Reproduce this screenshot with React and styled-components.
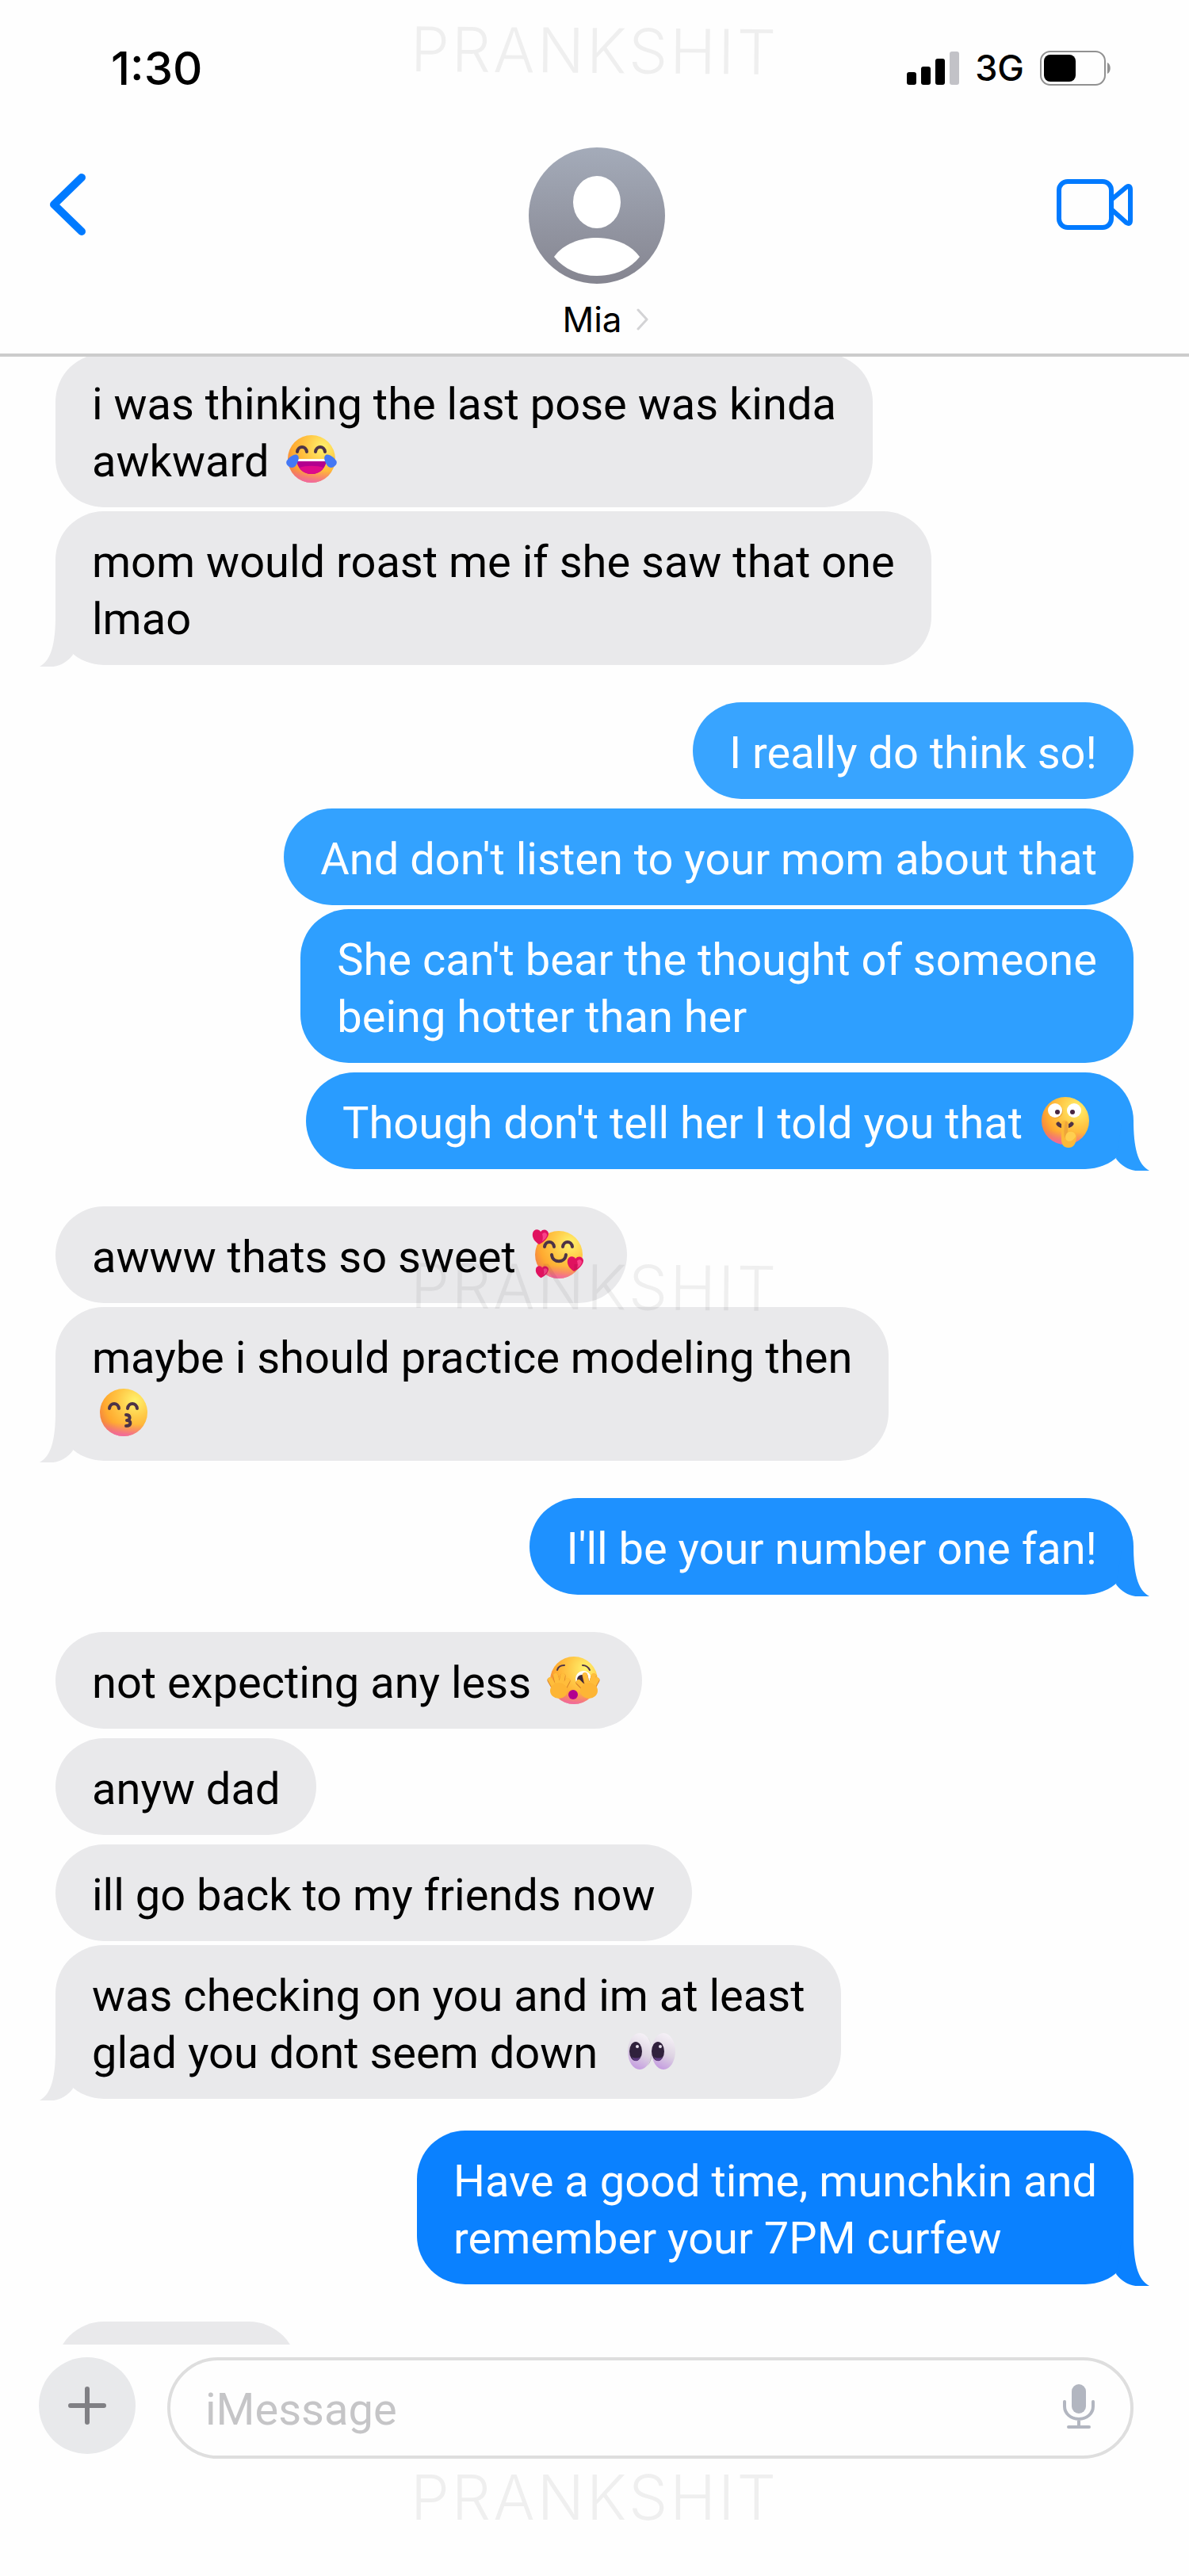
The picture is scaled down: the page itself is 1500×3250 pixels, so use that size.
import React, { useId, useState } from 'react';
import styled, { createGlobalStyle, css } from 'styled-components';

const GlobalStyle = createGlobalStyle`
	* {
		box-sizing: border-box;
	}
	body {
		margin: 0;
		background: #fefefe;
		color: #000;
		font-family: Inter, "Liberation Sans", sans-serif;
	}
	button {
		padding: 0;
		border: 0;
		background: none;
		color: inherit;
		font: inherit;
		cursor: pointer;
	}
`;

const Phone = styled.div`
	position: relative;
	display: flex;
	flex-direction: column;
	height: 100vh;
	overflow: hidden;
`;

const Header = styled.header`
	border-bottom: 4px solid #ccc;
`;

const StatusBar = styled.div`
	display: flex;
	justify-content: space-between;
	align-items: center;
	height: 172px;
	padding: 0 98px 0 140px;
	font-weight: 500;
`;

const Time = styled.time`
	font-size: 58px;
	line-height: 72px;
`;

const StatusIcons = styled.div`
	display: flex;
	align-items: center;
	gap: 20px;
	font-size: 45px;
	line-height: 56px;
`;

const Nav = styled.div`
	display: grid;
	grid-template-columns: 1fr auto 1fr;
	height: 274px;
	padding: 14px 56px 0 62px;
`;

const NavButton = styled.button`
	align-self: start;
	justify-self: ${(props) => (props.$end ? 'end' : 'start')};
	height: 80px;
	margin-top: 32px;

	svg {
		display: block;
	}
`;

const Contact = styled.button`
	display: flex;
	flex-direction: column;
	align-items: center;
	gap: 18px;
	font-size: 44px;
	line-height: 54px;
`;

const ContactName = styled.span`
	display: flex;
	align-items: center;
	gap: 18px;
	padding-left: 22px;
`;

const Thread = styled.ol`
	flex: 1;
	min-height: 0;
	margin: 0;
	padding: 0 70px;
	overflow: hidden;
	list-style: none;
`;

const Row = styled.li`
	display: flex;
	justify-content: ${(props) => (props.$sent ? 'flex-end' : 'flex-start')};
	padding-top: ${(props) => (props.$single ? 12 : 5)}px;

	${(props) => props.$group && css`
		margin-top: 35px;
	`}
	&:first-child {
		margin-top: -9px;
	}
`;

const Bubble = styled.div`
	position: relative;
	max-width: 82%;
	min-width: ${(props) => props.$minWidth || 0}px;
	min-height: 122px;
	padding: 28px 46px 22px;
	border-radius: 61px;
	background: ${(props) => props.$color};
	color: ${(props) => (props.$sent ? '#fff' : '#000')};
	font-family: Roboto, "Liberation Sans", sans-serif;
	font-size: 56px;
	line-height: 72px;
	white-space: pre-line;
`;

const TailSvg = styled.svg`
	position: absolute;
	bottom: -2px;
	${(props) => (props.$sent ? 'right: -20px;' : 'left: -20px; transform: scaleX(-1);')}
`;

const EmojiSvg = styled.svg`
	width: 64px;
	height: 64px;
	margin: -10px 8px;
	vertical-align: 0;
	overflow: visible;
`;

const Footer = styled.footer`
	display: flex;
	align-items: flex-start;
	gap: 40px;
	height: 292px;
	padding: 16px 70px 0 49px;
`;

const PlusButton = styled.button`
	flex: none;
	width: 122px;
	height: 122px;
	border-radius: 50%;
	background: #e8e9eb;

	svg {
		display: block;
		margin: 0 auto;
	}
`;

const InputBox = styled.label`
	flex: 1;
	display: flex;
	align-items: center;
	height: 128px;
	padding: 0 44px;
	border: 4px solid #dedede;
	border-radius: 64px;
`;

const MessageInput = styled.input`
	flex: 1;
	min-width: 0;
	height: 72px;
	padding: 4px 0 0;
	border: 0;
	outline: 0;
	background: none;
	font-family: Roboto, "Liberation Sans", sans-serif;
	font-size: 56px;

	&::placeholder {
		color: #c5c5c7;
		opacity: 1;
	}
`;

const Watermark = styled.div`
	position: absolute;
	top: ${(props) => props.$top}px;
	left: 0;
	right: 0;
	color: rgba(0, 0, 0, 0.06);
	font-size: 78px;
	font-weight: 300;
	line-height: 94px;
	letter-spacing: 3px;
	text-align: center;
	pointer-events: none;
	transform: rotate(${(props) => props.$tilt || 0}deg);
`;

// ---- emoji ----

const Face = ({ children }) => {
	const id = useId();
	return (
		<EmojiSvg viewBox="0 0 64 64" aria-hidden="true">
			<defs>
				<radialGradient id={`${id}y`} cx="0.74" cy="0.26" r="0.8">
					<stop offset="0" stopColor="#fff36e" />
					<stop offset="0.45" stopColor="#ffc846" />
					<stop offset="0.8" stopColor="#ffaa30" />
					<stop offset="1" stopColor="#f5893f" />
				</radialGradient>
				<linearGradient id={`${id}p`} x1="0.5" y1="0" x2="0.42" y2="1">
					<stop offset="0.72" stopColor="#f060a8" stopOpacity="0" />
					<stop offset="1" stopColor="#f060b8" stopOpacity="0.85" />
				</linearGradient>
			</defs>
			<circle cx="32" cy="32" r="30" fill={`url(#${id}y)`} />
			<circle cx="32" cy="32" r="30" fill={`url(#${id}p)`} />
			{children}
		</EmojiSvg>
	);
};

const BROWN = '#4d3347';

const SmileEyes = ({ y }) => (
	<g fill="none" stroke={BROWN} strokeWidth="4" strokeLinecap="round">
		<path d={`M14 ${y + 7}c1-8 11-8 12 0`} />
		<path d={`M37 ${y + 7}c1-8 11-8 12 0`} />
	</g>
);

const Heart = ({ x, y, size }) => (
	<g transform={`translate(${x} ${y}) scale(${size / 20})`}>
		<path d="M8 19C2 15-1 10 0 5 1-1 8-1 10 3c3-4 9-3 10 2 0 5-5 11-12 14z" fill="#e0125f" />
		<path d="M12 6c2-3 6-2 6 1 0 3-3 6-6 8 1-3 1-6 0-9z" fill="#ff4f93" opacity="0.8" />
	</g>
);

const Joy = () => (
	<Face>
		<SmileEyes y={16} />
		<path d="M13 32h38c0 11-8 19-19 19S13 43 13 32z" fill="#b3008f" />
		<path d="M17 43c7-3 23-3 30 0-3 5-8 8-15 8s-12-3-15-8z" fill="#de0a8b" />
		<path d="M13 32h38v3H13z" fill="#fff" />
		<path d="M14 27c3 2 2 7-1 12-2 4-6 5-9 3s-5-5-3-8c3-4 9-9 13-7z" fill="#4478f5" />
		<path d="M50 27c-3 2-2 7 1 12 2 4 6 5 9 3s5-5 3-8c-3-4-9-9-13-7z" fill="#4478f5" />
	</Face>
);

const Shush = () => (
	<Face>
		<circle cx="20" cy="20" r="9" fill="#d98524" opacity="0.4" />
		<circle cx="19" cy="19" r="9" fill="#fff" />
		<circle cx="43" cy="19" r="9" fill="#fff" />
		<circle cx="22" cy="21" r="3" fill="#482641" />
		<circle cx="41" cy="21" r="3" fill="#482641" />
		<path d="M23 36c3 4 14 4 17 0" fill="none" stroke={BROWN} strokeWidth="5" strokeLinecap="round" />
		<path d="M27 36c0-6 9-6 9 0v9c7-1 11 3 10 9-1 8-4 12-10 12s-9-4-9-10z" fill="#fcb939" />
		<path d="M32 33c3 0 3 2 3 4v9l-4 8c-1-6-1-14 1-21z" fill="#eea53a" />
		<path d="M37 46c5-1 8 2 8 6-3 5-8 8-12 4-2-4 0-9 4-10z" fill="#ffcf50" />
	</Face>
);

const Smitten = () => (
	<Face>
		<SmileEyes y={15} />
		<path d="M23 32c1 11 17 11 18 0" fill="none" stroke={BROWN} strokeWidth="4" strokeLinecap="round" />
		<Heart x={-1} y={0} size={20} />
		<Heart x={43} y={34} size={20} />
		<Heart x={3} y={46} size={16} />
	</Face>
);

const Kiss = () => (
	<Face>
		<SmileEyes y={20} />
		<path
			d="M35 35c6 0 6 7 1 7 6 0 6 7-1 7"
			fill="none"
			stroke={BROWN}
			strokeWidth="4"
			strokeLinecap="round"
			strokeLinejoin="round"
		/>
	</Face>
);

const Peek = () => (
	<Face>
		<g fill="none" stroke={BROWN} strokeWidth="2" strokeLinecap="round">
			<path d="M11 19c1-4 5-6 9-6M43 13c4 0 7 2 9 6" />
		</g>
		<circle cx="44" cy="30" r="10" fill="#fff" />
		<circle cx="42" cy="31" r="6" fill="#3c2838" />
		<circle cx="31" cy="50" r="6" fill="#b3008f" />
		<g fill="none" stroke="#d9822b" strokeLinecap="round" strokeWidth="7">
			<path d="M2 32l8 14M9 27l4 16M18 27l-3 16M24 33l-7 13" />
			<path d="M61 32l-8 14M57 27l-5 16M46 26l4 17M38 35l10 10" />
		</g>
		<g fill="none" stroke="#ffbd3b" strokeLinecap="round" strokeWidth="6">
			<path d="M2 31l8 14M9 26l4 16M18 26l-3 16M24 32l-7 13" />
			<path d="M61 31l-8 14M57 26l-5 16M46 25l4 17M38 34l10 10" />
		</g>
		<ellipse cx="13" cy="45" rx="11" ry="10" fill="#fdb535" />
		<ellipse cx="51" cy="45" rx="11" ry="10" fill="#fdb535" />
	</Face>
);

const Eyes = () => {
	const id = useId();
	return (
		<EmojiSvg viewBox="0 0 64 64" aria-hidden="true">
			<defs>
				<linearGradient id={id} x1="0.7" y1="0" x2="0.4" y2="1">
					<stop offset="0" stopColor="#f7f3f8" />
					<stop offset="0.55" stopColor="#ddd3e2" />
					<stop offset="1" stopColor="#c49be0" />
				</linearGradient>
			</defs>
			<ellipse cx="17" cy="33" rx="15" ry="23" fill={`url(#${id})`} />
			<ellipse cx="47" cy="33" rx="15" ry="23" fill={`url(#${id})`} />
			<path d="M26 14c8 9 8 29 0 38 5-4 7-12 6-19 0-8-2-15-6-19z" fill="#8d7d92" opacity="0.6" />
			<ellipse cx="12" cy="33" rx="8" ry="12" fill="#30213c" />
			<ellipse cx="40" cy="33" rx="8" ry="12" fill="#30213c" />
			<path d="M7 40c3 2 8 2 11 0-3 7-8 7-11 0zM35 40c3 2 8 2 11 0-3 7-8 7-11 0z" fill="#5d3a80" />
			<circle cx="14" cy="27" r="2" fill="#e8e0ee" />
			<circle cx="43" cy="27" r="2" fill="#e8e0ee" />
		</EmojiSvg>
	);
};

const Tail = ({ color, sent }) => (
	<TailSvg $sent={sent} width="48" height="64" viewBox="0 0 48 64" aria-hidden="true">
		<path d="M28 0C28 34 33 56 48 64 29 66 17 63 6 49L14 0z" fill={color} />
	</TailSvg>
);

// ---- messages ----

const GRAY = '#e9e9eb';

const messages = [
	{ text: 'i was thinking the last pose was kinda\nawkward ', emoji: <Joy /> },
	{ text: 'mom would roast me if she saw that one\nlmao', tail: true },
	{ text: 'I really do think so!', sent: true, color: '#38a4ff', single: true, group: true },
	{ text: "And don't listen to your mom about that", sent: true, color: '#33a2ff', single: true },
	{ text: "She can't bear the thought of someone\nbeing hotter than her", sent: true, color: '#2e9fff' },
	{ text: "Though don't tell her I told you that ", emoji: <Shush />, sent: true, color: '#299cff', single: true, tail: true },
	{ text: 'awww thats so sweet ', emoji: <Smitten />, single: true, group: true },
	{ text: 'maybe i should practice modeling then\n', emoji: <Kiss />, tail: true },
	{ text: "I'll be your number one fan!", sent: true, color: '#1e91ff', single: true, group: true, tail: true },
	{ text: 'not expecting any less ', emoji: <Peek />, single: true, group: true },
	{ text: 'anyw dad', single: true },
	{ text: 'ill go back to my friends now', single: true },
	{ text: 'was checking on you and im at least\nglad you dont seem down \u00a0', emoji: <Eyes />, tail: true },
	{ text: 'Have a good time, munchkin and\nremember your 7PM curfew', sent: true, color: '#0a81ff', group: true, tail: true },
	{ text: '', single: true, group: true, minWidth: 305 },
];

const Message = ({ text, emoji, sent, color = GRAY, single, group, tail, minWidth }) => (
	<Row $sent={sent} $single={single} $group={group}>
		<Bubble $sent={sent} $color={color} $minWidth={minWidth}>
			{text}
			{emoji}
			{tail && <Tail color={color} sent={sent} />}
		</Bubble>
	</Row>
);

// ---- header icons ----

const Signal = () => (
	<svg width="66" height="44" viewBox="0 0 66 44" aria-hidden="true">
		<rect x="0" y="27" width="12" height="16" rx="3" />
		<rect x="18" y="20" width="12" height="23" rx="3" />
		<rect x="36" y="10" width="12" height="33" rx="3" />
		<rect x="54" y="1" width="12" height="42" rx="3" fill="#c2c2c7" />
	</svg>
);

const Battery = () => (
	<svg width="90" height="44" viewBox="0 0 90 44" aria-hidden="true">
		<rect x="1" y="1" width="81" height="42" rx="12" fill="none" stroke="#919191" strokeWidth="2" />
		<rect x="5" y="5" width="40" height="34" rx="8" />
		<path d="M85 15c5 2 5 12 0 14z" fill="#919191" />
	</svg>
);

const Avatar = () => (
	<svg width="172" height="172" viewBox="0 0 172 172" aria-hidden="true">
		<defs>
			<linearGradient id="avatar" x1="0" y1="0" x2="0" y2="1">
				<stop offset="0" stopColor="#a4abb9" />
				<stop offset="1" stopColor="#858590" />
			</linearGradient>
		</defs>
		<circle cx="86" cy="86" r="86" fill="url(#avatar)" />
		<ellipse cx="86" cy="69" rx="30" ry="33" fill="#fff" />
		<path d="M32 138c12-17 34-24 54-24s42 7 54 24c-13 16-32 24-54 24s-41-8-54-24z" fill="#fff" />
	</svg>
);

const App = () => {
	const [ draft, setDraft ] = useState('');

	return (
		<Phone>
			<GlobalStyle />
			<Header>
				<StatusBar>
					<Time>1:30</Time>
					<StatusIcons>
						<Signal />
						<span>3G</span>
						<Battery />
					</StatusIcons>
				</StatusBar>
				<Nav>
					<NavButton type="button" aria-label="Back">
						<svg width="50" height="80" viewBox="0 0 50 80" fill="none">
							<path d="M41 6L6 40l35 34" stroke="#007aff" strokeWidth="10" strokeLinecap="round" strokeLinejoin="round" />
						</svg>
					</NavButton>
					<Contact type="button">
						<Avatar />
						<ContactName>
							Mia
							<svg width="16" height="28" viewBox="0 0 16 28" fill="none" aria-hidden="true">
								<path d="M2 2l11 12L2 26" stroke="#d3d3d5" strokeWidth="3" strokeLinecap="round" strokeLinejoin="round" />
							</svg>
						</ContactName>
					</Contact>
					<NavButton type="button" aria-label="Video call" $end>
						<svg width="112" height="80" viewBox="0 0 112 80" fill="none" stroke="#007aff" strokeWidth="6" strokeLinejoin="round">
							<rect x="4" y="11" width="66" height="58" rx="11" />
							<path d="M70 34l19-16q5-3 5 3v39q0 6-5 3L70 46" />
						</svg>
					</NavButton>
				</Nav>
			</Header>
			<Thread>
				{messages.map((message, index) => <Message key={index} {...message} />)}
			</Thread>
			<Footer>
				<PlusButton type="button" aria-label="Add">
					<svg width="48" height="48" viewBox="0 0 48 48" fill="none">
						<path d="M24 3v42M3 24h42" stroke="#808084" strokeWidth="6" strokeLinecap="round" />
					</svg>
				</PlusButton>
				<InputBox>
					<MessageInput
						type="text"
						aria-label="Message"
						placeholder="iMessage"
						value={draft}
						onChange={(evt) => setDraft(evt.target.value)}
					/>
					<button type="button" aria-label="Dictate">
						<svg width="42" height="58" viewBox="0 0 42 58" fill="none">
							<rect x="12" y="1" width="18" height="37" rx="9" fill="#b2b6c0" />
							<path d="M3 23v6c0 9 8 16 18 16s18-7 18-16v-6M21 45v8M8 55h26" stroke="#b2b6c0" strokeWidth="4" strokeLinecap="round" />
						</svg>
					</button>
				</InputBox>
			</Footer>
			<Watermark $top={17} $tilt={0.5}>PRANKSHIT</Watermark>
			<Watermark $top={1577} $tilt={0.5}>PRANKSHIT</Watermark>
			<Watermark $top={3104}>PRANKSHIT</Watermark>
		</Phone>
	);
};

export default App;
